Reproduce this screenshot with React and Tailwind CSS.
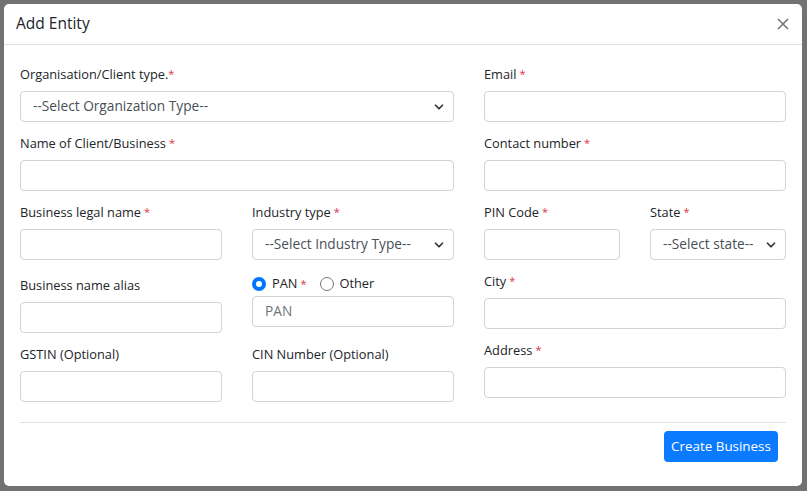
import { ChevronDown } from "lucide-react";

const Req = ({ tight }) => (
  <span className={`text-[#dc3545] text-[11px] align-top ${tight ? "ml-0" : "ml-[3px]"}`}>*</span>
);

const Label = ({ text, req, tight }) => (
  <div className="h-[20px] leading-[20px] text-[12.8px] text-[#212529] whitespace-nowrap">
    {text}
    {req && <Req tight={tight} />}
  </div>
);

const Input = ({ placeholder }) => (
  <div className="h-[31px] border border-[#ced4da] rounded-[4px] bg-white px-3 flex items-center text-[13.7px] text-[#6c757d]">
    {placeholder}
  </div>
);

const Select = ({ text }) => (
  <div className="h-[31px] border border-[#ced4da] rounded-[4px] bg-white pl-3 pr-[7px] flex items-center justify-between text-[13.7px] text-[#495057] whitespace-nowrap">
    <span>{text}</span>
    <ChevronDown size={14} strokeWidth={3} className="text-[#333]" />
  </div>
);

const Field = ({ label, req, tight, select, placeholder, className = "" }) => (
  <div className={className}>
    <Label text={label} req={req} tight={tight} />
    <div className="mt-[7px]">{select ? <Select text={select} /> : <Input placeholder={placeholder} />}</div>
  </div>
);

const Radio = ({ checked }) => (
  <span
    className={`inline-block w-[14px] h-[14px] rounded-full ${
      checked ? "border-[4px] border-[#0075ff]" : "border border-[#767676]"
    } bg-white`}
  />
);

export default function App() {
  return (
    <div className="w-[807px] h-[491px] bg-[#727272] pt-[4px] pl-[4px] overflow-hidden" style={{ fontFamily: "'Open Sans', 'Noto Sans', sans-serif" }}>
      <div className="w-[798px] h-[482px] bg-white rounded-[5px] flex flex-col">
        {/* header */}
        <div className="h-[41px] pl-3 pr-[12px] flex items-center justify-between border-b border-[#dee2e6]">
          <span className="text-[15.5px] text-[#212529]">Add Entity</span>
          <svg width="12" height="12" viewBox="0 0 12 12" className="mr-[1px]">
            <path d="M1 1L11 11M11 1L1 11" stroke="#777" strokeWidth="1.6" />
          </svg>
        </div>

        {/* body */}
        <div className="px-4 pt-[19px] flex gap-[30px]">
          {/* left */}
          <div className="w-[434px]">
            <Field label="Organisation/Client type." req tight select="--Select Organization Type--" />
            <Field className="mt-[11px]" label="Name of Client/Business" req />
            <div className="mt-[11px] flex gap-[30px]">
              <div className="w-[202px]">
                <Field label="Business legal name" req />
                <Field className="mt-[15px]" label="Business name alias" />
                <Field className="mt-[11px]" label="GSTIN (Optional)" />
              </div>
              <div className="w-[202px]">
                <Field label="Industry type" req select="--Select Industry Type--" />
                <div className="mt-[14px] h-[20px] flex items-center text-[12.8px] text-[#212529]">
                  <Radio checked />
                  <span className="ml-[6px]">PAN</span>
                  <Req />
                  <span className="ml-[13px] flex"><Radio /></span>
                  <span className="ml-[6px]">Other</span>
                </div>
                <div className="mt-[2px]">
                  <Input placeholder="PAN" />
                </div>
                <Field className="mt-[17px]" label="CIN Number (Optional)" />
              </div>
            </div>
          </div>

          {/* right */}
          <div className="w-[302px]">
            <Field label="Email" req />
            <Field className="mt-[11px]" label="Contact number" req />
            <div className="mt-[11px] flex gap-[30px]">
              <Field className="w-[136px]" label="PIN Code" req />
              <Field className="w-[136px]" label="State" req select="--Select state--" />
            </div>
            <Field className="mt-[11px]" label="City" req />
            <Field className="mt-[11px]" label="Address" req />
          </div>
        </div>

        {/* footer */}
        <div className="mx-4 mt-[20px] border-t border-[#dee2e6] flex justify-end pt-[8px] pr-[8px]">
          <button className="h-[31px] w-[114px] bg-[#0a7bff] text-white text-[13.4px] rounded-[4px]">
            Create Business
          </button>
        </div>
      </div>
    </div>
  );
}
